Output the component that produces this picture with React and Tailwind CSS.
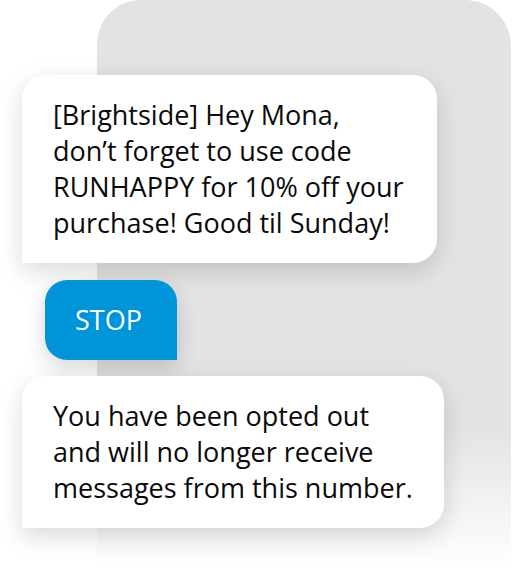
export default function App() {
  const font = { fontFamily: '"Open Sans", "Noto Sans", sans-serif' };

  return (
    <div className="w-[512px] h-[568px] bg-white overflow-hidden" style={font}>
      {/* phone backdrop */}
      <div className="ml-[97px] w-[414px] h-[568px] rounded-tl-[44px] rounded-tr-[46px] bg-linear-to-b from-[#e3e3e3] from-75% to-white pt-[75px]">
        <div className="flex flex-col items-start">
          <Bubble className="w-[415px]">
            [Brightside] Hey Mona,
            <br />
            don’t forget to use code
            <br />
            RUNHAPPY for 10% off your
            <br />
            purchase! Good til Sunday!
          </Bubble>

          <div className="-ml-[52px] mt-[17px] w-[132px] h-[80px] flex items-center pl-[30px] bg-[#0095d8] text-white text-[27px] rounded-t-[22px] rounded-bl-[22px] shadow-[0_8px_22px_rgba(0,0,0,0.16)]">
            STOP
          </div>

          <Bubble className="w-[422px] mt-[16px]">
            You have been opted out
            <br />
            and will no longer receive
            <br />
            messages from this number.
          </Bubble>
        </div>
      </div>
    </div>
  );
}

function Bubble({ children, className = "" }) {
  return (
    <div
      className={`-ml-[75px] bg-white text-[#0a0a0a] text-[27px] leading-[36px] pl-[31px] pr-2 py-[22px] whitespace-nowrap rounded-t-[24px] rounded-br-[24px] shadow-[0_8px_24px_rgba(0,0,0,0.15)] ${className}`}
    >
      {children}
    </div>
  );
}
